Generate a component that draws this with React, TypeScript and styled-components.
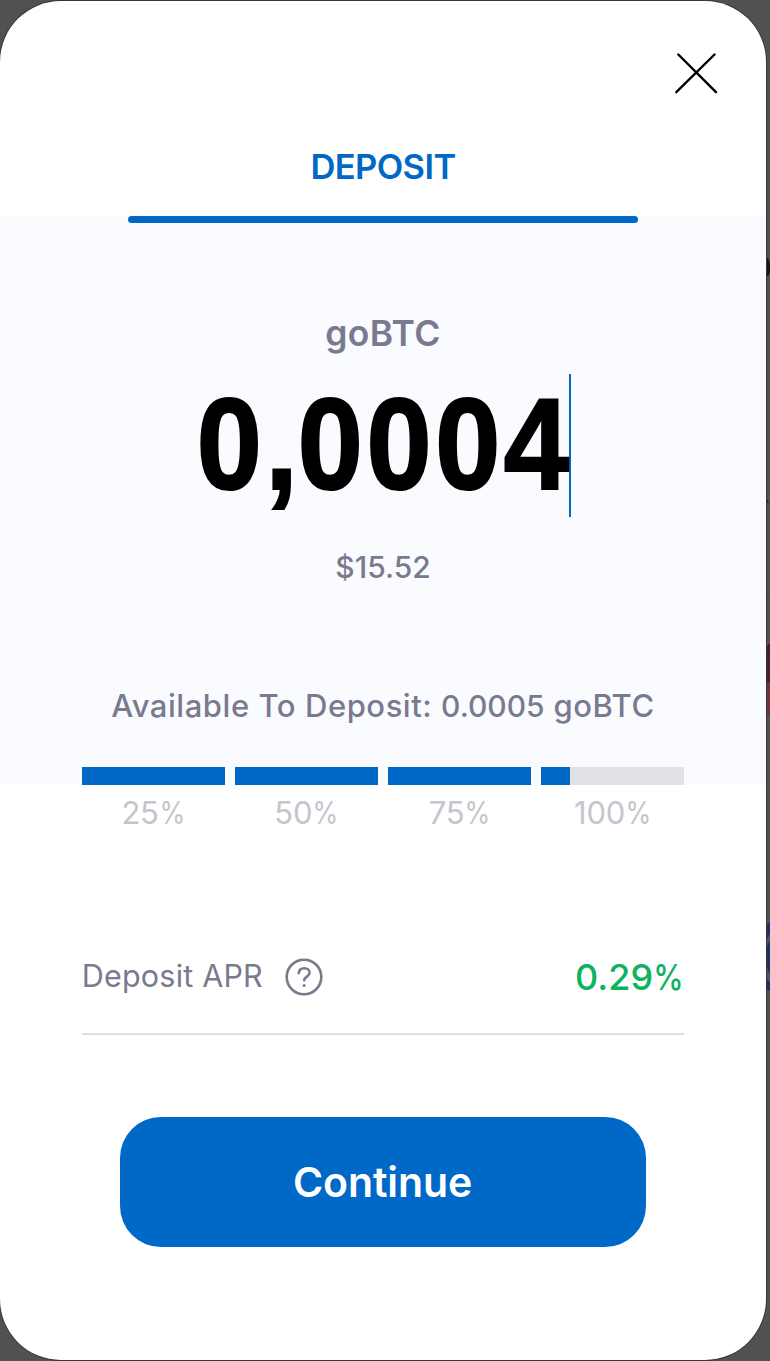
import React from "react";
import styled, { createGlobalStyle } from "styled-components";

const blue = "#0069c7";
const grey = "#797a8f";

const GlobalStyle = createGlobalStyle`
  * { box-sizing: border-box; }
  body { margin: 0; background: #505153; font-family: Inter, "Liberation Sans", sans-serif; }
`;

const Page = styled.main`
  position: relative;
  width: 770px;
  height: 1361px;
  padding-top: 1px;
  overflow: hidden;
  background: #505153;
`;

const Backdrop = styled.svg`
  position: absolute;
  inset: 0;
`;

const Sheet = styled.section`
  position: relative;
  display: flex;
  flex-direction: column;
  width: 766px;
  height: 1359px;
  border-radius: 61px;
  background: #fff;
  box-shadow: 0 0 0 1px #37373b;
  overflow: hidden;
`;

const Header = styled.header`
  display: flex;
  flex-direction: column;
  height: 215px;
`;

const CloseButton = styled.button`
  align-self: flex-end;
  width: 48px;
  height: 48px;
  margin: 48px 46px 0 0;
  padding: 0;
  border: 0;
  background: none;
  svg { display: block; }
`;

const Label = styled.div<{ $size: number; $weight?: number; $spacing?: number; $color?: string; $line: number }>`
  font-size: ${(p) => p.$size}px;
  font-weight: ${(p) => p.$weight ?? 500};
  letter-spacing: ${(p) => p.$spacing ?? 0}px;
  line-height: ${(p) => p.$line}px;
  color: ${(p) => p.$color ?? grey};
  text-align: center;
  white-space: nowrap;
`;

const Spaced = styled.span`
  font-size: 31px;
  letter-spacing: 0.55px;
`;

const PercentSign = styled.span`
  display: inline-block;
  margin-left: -0.13em;
  transform: scaleX(0.85);
  transform-origin: right center;
`;

const Tab = styled.div`
  padding-top: 46px;
`;

const AmountPanel = styled.div`
  display: flex;
  flex-direction: column;
  align-items: center;
  height: 569px;
  background: #fafbfe;
`;

const TabIndicator = styled.div`
  width: 510px;
  height: 7px;
  border-radius: 3.5px;
  background: ${blue};
`;

const Asset = styled.div`
  margin-top: 90px;
`;

const Amount = styled.div`
  display: flex;
  justify-content: flex-end;
  width: 376px;
  height: 143px;
  margin-top: 20px;
  border-right: 2px solid ${blue};
`;

const AmountValue = styled.span`
  font: 700 117px/141px "Liberation Sans", Arial, sans-serif;
  letter-spacing: 3.6px;
  margin-right: -3.5px;
  color: #000;
  -webkit-text-stroke: 2px #000;
  transform: scaleY(1.105);
`;

const Separator = styled.span`
  letter-spacing: 0;
`;

const Fiat = styled.div`
  margin-top: 30px;
`;

const Available = styled.div`
  margin-top: 98px;
`;

const Segments = styled.div`
  display: flex;
  gap: 10.4px;
  width: 602.4px;
  margin-top: auto;
`;

const Segment = styled.div`
  flex: 1;
  height: 17.6px;
  background: #e0e2e6;
`;

const SegmentFill = styled.div<{ $fill: number }>`
  width: ${(p) => p.$fill}%;
  height: 100%;
  background: ${blue};
`;

const SegmentLabels = styled.div`
  display: grid;
  grid-template-columns: repeat(4, 1fr);
  gap: 10.4px;
  width: 602.4px;
  margin: 8px auto 0;
`;

const RateRow = styled.div`
  display: flex;
  align-items: center;
  width: 602.4px;
  height: 114px;
  margin: 88px auto 0;
  padding-bottom: 2px;
  border-bottom: 2px solid #dedfe1;
  svg { margin: 2px 0 0 22px; }
`;

const Rate = styled.div`
  margin-left: auto;
  padding-top: 1px;
`;

const ContinueButton = styled.button`
  display: flex;
  align-items: center;
  justify-content: center;
  width: 526px;
  height: 130px;
  margin: 82px auto 0;
  padding: 0 1px 1px 0;
  border: 0;
  border-radius: 41px;
  background: ${blue};
  font-family: inherit;
`;

const steps = [
  { value: 25, fill: 100 },
  { value: 50, fill: 100 },
  { value: 75, fill: 100 },
  { value: 100, fill: 20 },
];

export default function App() {
  return (
    <>
      <GlobalStyle />
      <Page>
        <Backdrop width="770" height="1361" viewBox="0 0 770 1361">
          <path d="M766 257Q770 258 770 268T766 276Z" fill="#121316" />
          <path d="M766 497L769 503H766Z" fill="#25262a" />
          <path d="M766 598H770M766 872H770" stroke="#434448" />
          <path d="M766 647L770 643V659L766 664Z" fill="#431c30" />
          <path d="M766 662L770 657V682H766Z" fill="#4c1c31" />
          <path d="M766 682H770V715H766Z" fill="#6a3532" />
          <path d="M766 926L770 922V934L766 940ZM766 950Q768 943 770 941V974L766 966ZM766 977L770 983V991L766 989Z" fill="#16345f" />
        </Backdrop>
        <Sheet>
          <Header>
            <CloseButton aria-label="Close">
              <svg width="48" height="48" viewBox="0 0 48 48" fill="none" stroke="#000" strokeWidth="2.4" strokeLinecap="round">
                <path d="M6.3 5.5L44 43.2M42.5 5.5L4.3 43.2" />
              </svg>
            </CloseButton>
            <Tab><Label $size={34.5} $weight={600} $spacing={-0.6} $line={48} $color={blue}>DEPOSIT</Label></Tab>
          </Header>
          <AmountPanel>
            <TabIndicator />
            <Asset><Label $size={35.5} $weight={600} $spacing={0.4} $line={41}>goBTC</Label></Asset>
            <Amount><AmountValue>0<Separator>,</Separator>0004</AmountValue></Amount>
            <Fiat><Label $size={30} $line={40}>$15.52</Label></Fiat>
            <Available>
              <Label $size={30} $line={41}>
                <Spaced>Available To Deposit: </Spaced>0.0005<Spaced> goBTC</Spaced>
              </Label>
            </Available>
            <Segments>
              {steps.map((s) => (
                <Segment key={s.value}><SegmentFill $fill={s.fill} /></Segment>
              ))}
            </Segments>
          </AmountPanel>
          <SegmentLabels>
            {steps.map((s) => (
              <Label key={s.value} $size={31} $weight={400} $spacing={-0.2} $line={40} $color="#c4c5ce">
                {s.value}<PercentSign>%</PercentSign>
              </Label>
            ))}
          </SegmentLabels>
          <RateRow>
            <Label $size={30.5} $weight={400} $spacing={0.2} $line={40}>Deposit APR</Label>
            <svg width="38" height="38" viewBox="0 0 38 38" fill="none" stroke={grey} strokeWidth="2.6" strokeLinecap="round">
              <circle cx="19" cy="19" r="17.3" />
              <path d="M13.7 15.2C14 12 16.2 10.2 19.2 10.2C22.4 10.2 24.6 12 24.6 14.8C24.6 18.6 19.4 18.6 19.2 22.2" />
              <circle cx="19.1" cy="27.4" r="1.5" fill={grey} stroke="none" />
            </svg>
            <Rate><Label $size={36} $line={40} $color="#0eb25f">0.29<PercentSign>%</PercentSign></Label></Rate>
          </RateRow>
          <ContinueButton><Label $size={41} $weight={600} $spacing={-0.1} $line={50} $color="#fff">Continue</Label></ContinueButton>
        </Sheet>
      </Page>
    </>
  );
}
